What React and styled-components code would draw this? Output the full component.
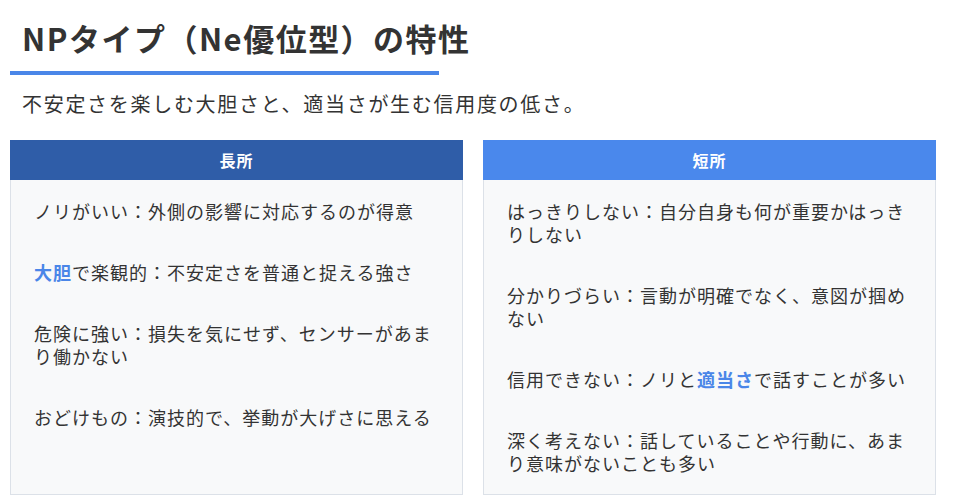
import styled, { createGlobalStyle } from "styled-components";

const GlobalStyle = createGlobalStyle`
    body {
        margin: 0;
        background: #fff;
        font-family: "Noto Sans CJK JP", "Noto Sans", sans-serif;
        color: #333;
    }
`;

const Page = styled.div`
    padding: 15px 17px 0 10px;
`;

const Title = styled.h2`
    width: 417px;
    margin: 0;
    padding: 0 0 11px 12px;
    font-size: 31px;
    line-height: 45px;
    font-weight: 700;
    letter-spacing: 1.5px;
    white-space: nowrap;
    border-bottom: 4px solid #4a86e8;
`;

const Lead = styled.p`
    margin: 14px 0 21px 12px;
    font-size: 20px;
    line-height: 30px;
    letter-spacing: 1.7px;
`;

const Columns = styled.div`
    display: flex;
    gap: 20px;
`;

const Card = styled.div`
    flex: 1;
    display: flex;
    flex-direction: column;
    background: #f8f9fa;
    border: 1px solid #dce1e8;
`;

const Head = styled.div`
    height: 40px;
    margin: -1px -1px 0;
    display: flex;
    align-items: center;
    justify-content: center;
    background: ${(p) => p.$color};
    color: #fff;
    font-size: 16px;
    font-weight: 700;
    letter-spacing: 1px;
`;

const Body = styled.div`
    flex: 1;
    padding: 20px 23px 19px;
`;

const Item = styled.p`
    margin: 0 0 38px;
    font-size: 18px;
    line-height: 23px;
    letter-spacing: 1px;
    &:last-child {
        margin-bottom: 0;
    }
`;

const Mark = styled.strong`
    color: #4a86e8;
    font-weight: 700;
`;

const App = () => {
    return (
        <>
            <GlobalStyle />
            <Page>
                <Title>NPタイプ（Ne優位型）の特性</Title>
                <Lead>不安定さを楽しむ大胆さと、適当さが生む信用度の低さ。</Lead>
                <Columns>
                    <Card>
                        <Head $color="#2f5da8">長所</Head>
                        <Body>
                            <Item>ノリがいい：外側の影響に対応するのが得意</Item>
                            <Item><Mark>大胆</Mark>で楽観的：不安定さを普通と捉える強さ</Item>
                            <Item>危険に強い：損失を気にせず、センサーがあまり働かない</Item>
                            <Item>おどけもの：演技的で、挙動が大げさに思える</Item>
                        </Body>
                    </Card>
                    <Card>
                        <Head $color="#4a88ec">短所</Head>
                        <Body>
                            <Item>はっきりしない：自分自身も何が重要かはっきりしない</Item>
                            <Item>分かりづらい：言動が明確でなく、意図が掴めない</Item>
                            <Item>信用できない：ノリと<Mark>適当さ</Mark>で話すことが多い</Item>
                            <Item>深く考えない：話していることや行動に、あまり意味がないことも多い</Item>
                        </Body>
                    </Card>
                </Columns>
            </Page>
        </>
    );
};

export default App;
